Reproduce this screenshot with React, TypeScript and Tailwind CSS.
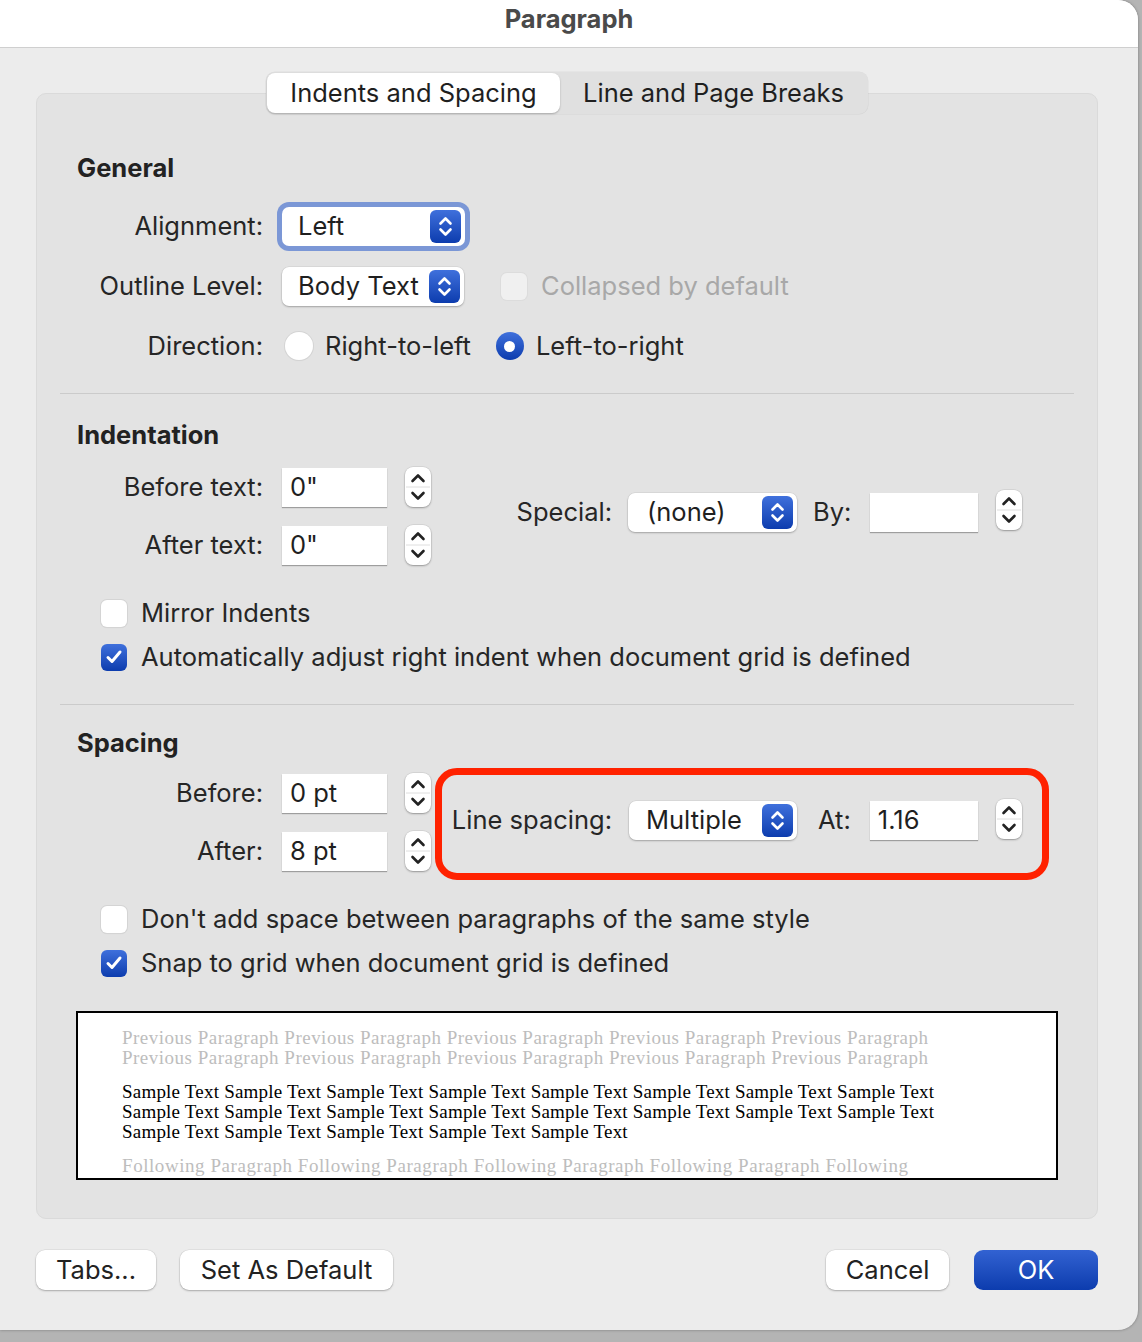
import type { ReactNode } from 'react'

const sans = 'font-["Inter","Noto_Sans",sans-serif]'

function Chevrons() {
  return (
    <span className="flex h-[33px] w-[31px] items-center justify-center rounded-[6px] bg-gradient-to-b from-[#3f70dc] to-[#0c3cae]">
      <svg width="31" height="33" viewBox="0 0 31 33" fill="none">
        <path d="M10.5 13.5 L15.5 8.5 L20.5 13.5" stroke="white" strokeWidth="2.6" strokeLinecap="round" strokeLinejoin="round" />
        <path d="M10.5 19.5 L15.5 24.5 L20.5 19.5" stroke="white" strokeWidth="2.6" strokeLinecap="round" strokeLinejoin="round" />
      </svg>
    </span>
  )
}

function Popup({ value, width, pl, focused }: { value: string; width: string; pl: string; focused?: boolean }) {
  return (
    <div
      className={`flex h-[39px] ${width} shrink-0 items-center justify-between rounded-[7px] bg-white pr-[4px] ${pl} shadow-[0_1px_2px_rgba(0,0,0,0.25),0_0_0_0.5px_rgba(0,0,0,0.08)] ${
        focused ? 'ring-[5px] ring-[#7b97d6]' : ''
      }`}
    >
      <span className="text-[25.5px] leading-none text-[#1f1f1f]">{value}</span>
      <Chevrons />
    </div>
  )
}

function Field({ value, width = 'w-[105px]' }: { value?: string; width?: string }) {
  return (
    <div className={`flex h-[39px] ${width} shrink-0 items-center bg-white pl-[8px] shadow-[0_1px_1px_rgba(0,0,0,0.3)]`}>
      <span className="text-[25.5px] leading-none text-[#1f1f1f]">{value}</span>
    </div>
  )
}

function Stepper() {
  return (
    <div className="flex h-[40px] w-[26px] shrink-0 flex-col items-center rounded-[8px] bg-white shadow-[0_1px_2px_rgba(0,0,0,0.3),0_0_0_0.5px_rgba(0,0,0,0.1)]">
      <svg width="26" height="40" viewBox="0 0 26 40" fill="none">
        <path d="M7.5 14 L13 8.5 L18.5 14" stroke="#222" strokeWidth="2.6" strokeLinecap="round" strokeLinejoin="round" />
        <line x1="1" y1="20" x2="25" y2="20" stroke="#dedede" strokeWidth="1" />
        <path d="M7.5 26 L13 31.5 L18.5 26" stroke="#222" strokeWidth="2.6" strokeLinecap="round" strokeLinejoin="round" />
      </svg>
    </div>
  )
}

function Checkbox({ checked, disabled }: { checked?: boolean; disabled?: boolean }) {
  if (checked) {
    return (
      <span className="flex h-[27px] w-[26px] shrink-0 items-center justify-center rounded-[6px] bg-gradient-to-b from-[#3f70dc] to-[#0c3cae]">
        <svg width="18" height="16" viewBox="0 0 18 16" fill="none">
          <path d="M3 8.5 L7 12.5 L15 3" stroke="white" strokeWidth="3" strokeLinecap="round" strokeLinejoin="round" />
        </svg>
      </span>
    )
  }
  return (
    <span
      className={`h-[27px] w-[26px] shrink-0 rounded-[6px] ${
        disabled ? 'bg-[#f0f0f0] shadow-[0_0_0_1px_#dcdcdc]' : 'bg-white shadow-[0_0_0_1px_#d4d4d4,0_1px_1px_rgba(0,0,0,0.08)]'
      }`}
    />
  )
}

function Radio({ on }: { on?: boolean }) {
  if (on) {
    return (
      <span className="flex h-[28px] w-[28px] shrink-0 items-center justify-center rounded-full bg-gradient-to-b from-[#3f70dc] to-[#0c3cae]">
        <span className="h-[11px] w-[11px] rounded-full bg-white" />
      </span>
    )
  }
  return <span className="h-[28px] w-[28px] shrink-0 rounded-full bg-white shadow-[0_0_0_1px_#d4d4d4,0_1px_1px_rgba(0,0,0,0.08)]" />
}

function Label({ children, width = 'w-[226px]' }: { children: ReactNode; width?: string }) {
  return <span className={`${width} shrink-0 text-right text-[25.5px] leading-none text-[#262626]`}>{children}</span>
}

function Heading({ children, mt }: { children: ReactNode; mt: string }) {
  return (
    <div className={`flex h-[40px] items-center pl-[40px] ${mt}`}>
      <span className="text-[25.5px] font-bold leading-none text-[#222]">{children}</span>
    </div>
  )
}

function Separator({ mt }: { mt: string }) {
  return <div className={`mx-[23px] h-px bg-[#cbcbcb] ${mt}`} />
}

function CheckRow({ label, checked, mt }: { label: string; checked?: boolean; mt: string }) {
  return (
    <div className={`flex h-[40px] items-center gap-[14px] pl-[64px] ${mt}`}>
      <Checkbox checked={checked} />
      <span className="text-[25.5px] leading-none text-[#262626]">{label}</span>
    </div>
  )
}

function FieldRow({ label, value, mt }: { label: string; value: string; mt?: string }) {
  return (
    <div className={`flex h-[40px] items-center ${mt ?? ''}`}>
      <Label>{label}</Label>
      <span className="ml-[19px]">
        <Field value={value} />
      </span>
      <span className="ml-[18px]">
        <Stepper />
      </span>
    </div>
  )
}

function Button({ children, width, primary }: { children: ReactNode; width: string; primary?: boolean }) {
  return (
    <div
      className={`flex h-[40px] ${width} items-center justify-center rounded-[9px] text-[25.5px] leading-none ${
        primary
          ? 'bg-gradient-to-b from-[#3262d2] to-[#0c3cae] text-white'
          : 'bg-white text-[#222] shadow-[0_1px_2px_rgba(0,0,0,0.25),0_0_0_0.5px_rgba(0,0,0,0.08)]'
      }`}
    >
      {children}
    </div>
  )
}

const prev = 'Previous Paragraph Previous Paragraph Previous Paragraph Previous Paragraph Previous Paragraph'
const sample8 = 'Sample Text Sample Text Sample Text Sample Text Sample Text Sample Text Sample Text Sample Text'
const sample5 = 'Sample Text Sample Text Sample Text Sample Text Sample Text'
const following = 'Following Paragraph Following Paragraph Following Paragraph Following Paragraph Following'

export default function App() {
  return (
    <div className={`h-[1342px] w-[1142px] overflow-hidden bg-[#b4b4b4] ${sans}`}>
      <div className="flex h-[1330px] w-[1138px] flex-col rounded-tr-[20px] rounded-br-[20px] bg-[#ececec] shadow-[0_0_3px_rgba(0,0,0,0.35)]">
        <div className="flex h-[48px] shrink-0 items-center justify-center rounded-tr-[20px] border-b border-[#cfcfcf] bg-white pb-[9px]">
          <span className="text-[25.5px] font-bold leading-none text-[#4a4a4a]">Paragraph</span>
        </div>

        <div className="flex flex-col pl-[36px] pr-[40px]">
          <div className="relative z-10 mt-[24px] -mb-[21px] flex justify-center">
            <div className="flex h-[42px] w-[602px] items-center rounded-[9px] bg-[#e0e0e0] p-[1px] shadow-[0_0_0_0.5px_rgba(0,0,0,0.06)]">
              <div className="flex h-[40px] w-[293px] items-center justify-center rounded-[8px] bg-white text-[25.5px] leading-none text-[#1f1f1f] shadow-[0_1px_2px_rgba(0,0,0,0.25)]">
                Indents and Spacing
              </div>
              <div className="flex h-[40px] flex-1 items-center justify-center text-[25.5px] leading-none text-[#1f1f1f]">
                Line and Page Breaks
              </div>
            </div>
          </div>

          <div className="flex h-[1126px] flex-col rounded-[10px] border border-[#dadada] bg-[#e3e3e3]">
            <Heading mt="mt-[54px]">General</Heading>

            <div className="mt-[18px] flex h-[40px] items-center">
              <Label>Alignment:</Label>
              <span className="ml-[19px]">
                <Popup value="Left" width="w-[183px]" pl="pl-[16px]" focused />
              </span>
            </div>

            <div className="mt-[20px] flex h-[40px] items-center">
              <Label>Outline Level:</Label>
              <span className="ml-[19px]">
                <Popup value="Body Text" width="w-[182px]" pl="pl-[16px]" />
              </span>
              <span className="ml-[37px] flex items-center gap-[14px]">
                <Checkbox disabled />
                <span className="text-[25.5px] leading-none text-[#a8a8a8]">Collapsed by default</span>
              </span>
            </div>

            <div className="mt-[20px] flex h-[40px] items-center">
              <Label>Direction:</Label>
              <span className="ml-[22px] flex items-center gap-[12px]">
                <Radio />
                <span className="text-[25.5px] leading-none text-[#262626]">Right-to-left</span>
              </span>
              <span className="ml-[25px] flex items-center gap-[12px]">
                <Radio on />
                <span className="text-[25.5px] leading-none text-[#262626]">Left-to-right</span>
              </span>
            </div>

            <Separator mt="mt-[27px]" />

            <Heading mt="mt-[21px]">Indentation</Heading>

            <div className="mt-[12px] flex items-start">
              <div className="flex flex-col">
                <FieldRow label="Before text:" value={'0"'} />
                <FieldRow label="After text:" value={'0"'} mt="mt-[18px]" />
              </div>
              <div className="mt-[25px] flex h-[40px] items-center">
                <Label width="w-[181px]">Special:</Label>
                <span className="ml-[16px]">
                  <Popup value="(none)" width="w-[169px]" pl="pl-[19px]" />
                </span>
                <span className="ml-[16px] text-[25.5px] leading-none text-[#262626]">By:</span>
                <span className="ml-[19px]">
                  <Field width="w-[108px]" />
                </span>
                <span className="ml-[18px] -mt-[4px]">
                  <Stepper />
                </span>
              </div>
            </div>

            <CheckRow label="Mirror Indents" mt="mt-[28px]" />
            <CheckRow label="Automatically adjust right indent when document grid is defined" checked mt="mt-[4px]" />

            <Separator mt="mt-[27px]" />

            <Heading mt="mt-[18px]">Spacing</Heading>

            <div className="mt-[10px] flex items-start">
              <div className="flex flex-col">
                <FieldRow label="Before:" value="0 pt" />
                <FieldRow label="After:" value="8 pt" mt="mt-[18px]" />
              </div>
              <div className="-mt-[5px] ml-[4px] flex h-[112px] w-[614px] items-start rounded-[22px] border-[7px] border-[#ff2200] pt-[25px]">
                <div className="flex h-[40px] items-center">
                  <Label width="w-[170px]">Line spacing:</Label>
                  <span className="ml-[17px]">
                    <Popup value="Multiple" width="w-[168px]" pl="pl-[17px]" />
                  </span>
                  <span className="ml-[21px] text-[25.5px] leading-none text-[#262626]">At:</span>
                  <span className="ml-[19px]">
                    <Field value="1.16" width="w-[108px]" />
                  </span>
                  <span className="ml-[18px] -mt-[3px]">
                    <Stepper />
                  </span>
                </div>
              </div>
            </div>

            <CheckRow label="Don't add space between paragraphs of the same style" mt="mt-[19px]" />
            <CheckRow label="Snap to grid when document grid is defined" checked mt="mt-[4px]" />

            <div className="mx-[39px] mt-[28px] h-[169px] overflow-hidden border-2 border-black bg-white pl-[44px] pt-[15px] font-['Liberation_Serif',serif] text-[19px] leading-[20px]">
              <div className="whitespace-nowrap tracking-[0.49px] text-[#bdbdbd]">{prev}</div>
              <div className="whitespace-nowrap tracking-[0.49px] text-[#bdbdbd]">{prev}</div>
              <div className="mt-[14px] whitespace-nowrap tracking-[0.21px] text-black">{sample8}</div>
              <div className="whitespace-nowrap tracking-[0.21px] text-black">{sample8}</div>
              <div className="whitespace-nowrap tracking-[0.21px] text-black">{sample5}</div>
              <div className="mt-[14px] whitespace-nowrap tracking-[0.56px] text-[#bdbdbd]">{following}</div>
            </div>
          </div>

          <div className="mt-[31px] flex items-center">
            <Button width="w-[120px]">Tabs...</Button>
            <span className="ml-[24px]">
              <Button width="w-[213px]">Set As Default</Button>
            </span>
            <span className="ml-auto">
              <Button width="w-[123px]">Cancel</Button>
            </span>
            <span className="ml-[25px]">
              <Button width="w-[124px]" primary>
                OK
              </Button>
            </span>
          </div>
        </div>
      </div>
    </div>
  )
}
